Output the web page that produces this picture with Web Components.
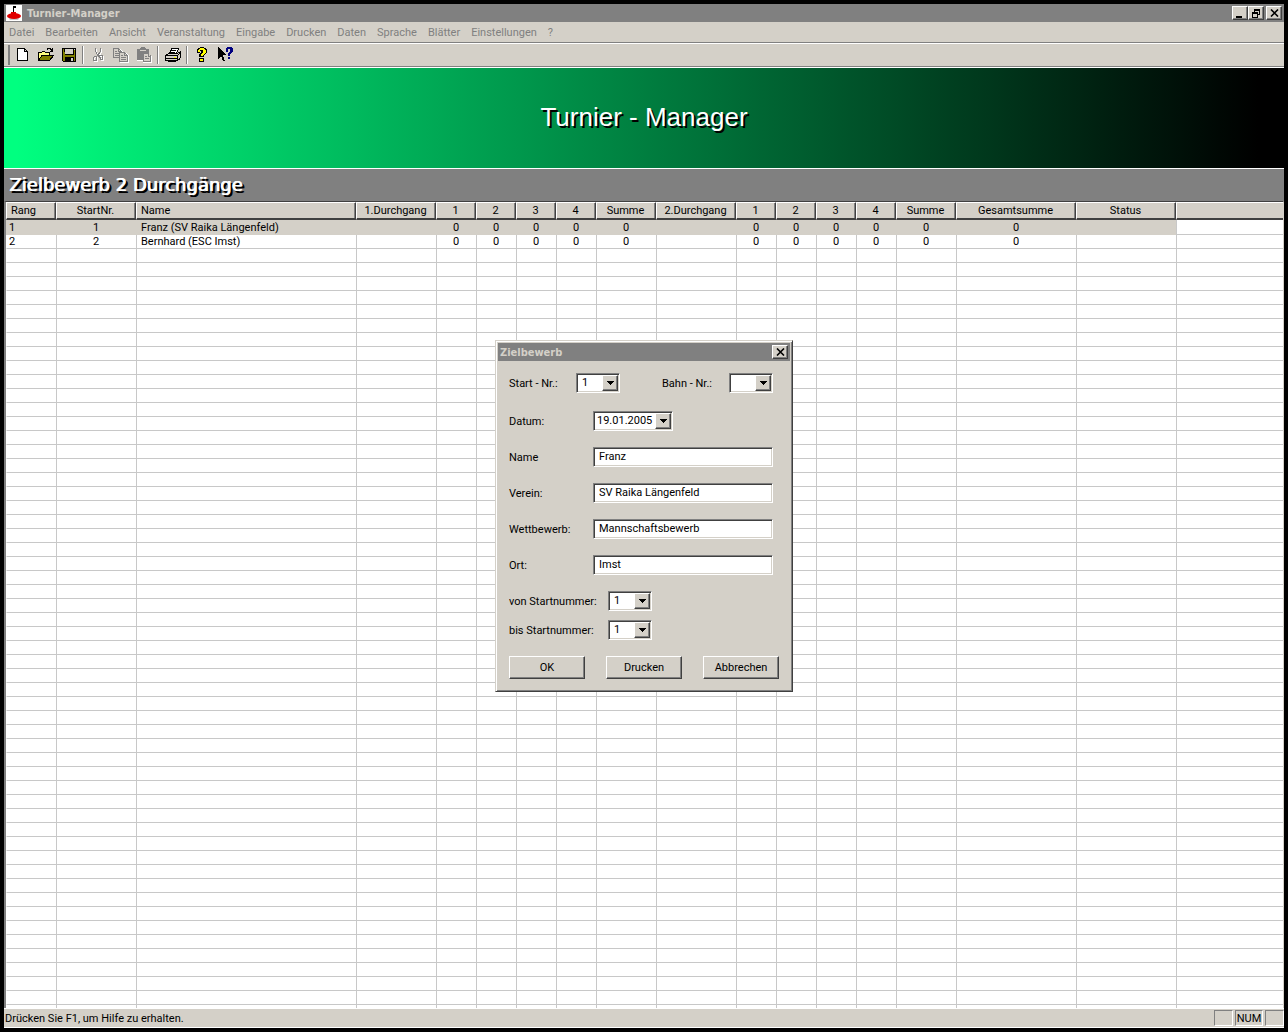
<!DOCTYPE html>
<html lang="de">
<head>
<meta charset="utf-8">
<title>Turnier-Manager</title>
<style>
  :root {
    --face: #d4d0c8;
    --shade: #808080;
    --dark: #404040;
    --light: #ffffff;
    --ui: Roboto, "Liberation Sans", sans-serif;
    --heavy: "DejaVu Sans Condensed", "DejaVu Sans", sans-serif;
  }
  html, body { height: 100%; margin: 0; }
  body { background: #000; font: 11px/14px var(--ui); color: #000; }
</style>
</head>
<body>
<tm-window>
  <title-bar slot="title" caption="Turnier-Manager" kind="main"></title-bar>
  <menu-bar slot="menu" items="Datei,Bearbeiten,Ansicht,Veranstaltung,Eingabe,Drucken,Daten,Sprache,Blätter,Einstellungen,?"></menu-bar>
  <tool-bar slot="tools"></tool-bar>
  <app-banner slot="banner">Turnier - Manager</app-banner>
  <section-title slot="heading">Zielbewerb 2 Durchgänge</section-title>
  <result-table></result-table>
  <status-bar slot="status">Drücken Sie F1, um Hilfe zu erhalten.</status-bar>
  <entry-dialog slot="dialog"></entry-dialog>
</tm-window>

<script>
const define = (name, html, setup) => {
  const template = document.createElement('template');
  template.innerHTML = '<style>*,*::before,:host{box-sizing:border-box}</style>' + html;
  customElements.define(name, class extends HTMLElement {
    connectedCallback() {
      if (this.shadowRoot) return;
      const root = this.attachShadow({ mode: 'open' });
      root.append(template.content.cloneNode(true));
      if (setup) setup(this, root);
    }
  });
};

const icons = {
  'Neu': '<path fill="#fff" stroke="#000" d="M2.5 1.5h7l3 3v9h-10zM9.500 1.500v3h3"/>',
  'Öffnen': '<path fill="#ffff80" stroke="#000" d="M.5 13.500v-8h3l1-1h2l1 1h4v3"/><path fill="#808000" stroke="#000" d="M.5 13.500l3.500-5h11.500l-4 5z"/><path fill="none" stroke="#000" d="M9 2.500l1-1h2l2 2M14.500 1v3.500h-3"/>',
  'Speichern': '<path fill="#808000" stroke="#000" d="M1.500 1.500h13v13h-12l-1-1z"/><path fill="#d4d0c8" d="M4 2h8v6H4z"/><path d="M4 10h9v5H4zM3 2h1v6h9V2h-1v5H4z"/><path fill="#d4d0c8" d="M10 11h2v3h-2zM13 2h1v1h-1z"/>',
  'Ausschneiden': '<path fill="none" stroke="#fff" d="M6.500 2v3l2 4 2 2M11.500 2v3l-3 5M5.500 10.500h2v4h-3v-3zM10.500 9.500h3v4h-2z"/><path fill="none" stroke="#808080" d="M5.500 1v3l2 4 2 2M10.500 1v3l-3 5M4.500 9.500h2v4h-3v-3zM9.500 8.500h3v4h-2z"/>',
  'Kopieren': '<path fill="none" stroke="#fff" d="M1.500 2.500h6l2 2v6h-8zM7.500 6.500h6l2 2v7h-8z"/><path fill="#d4d0c8" stroke="#808080" d="M.5 1.500h5l3 3v6h-8zM5.500 1.500v3h3M2 4.500h2M2 6.500h5M2 8.500h4"/><path fill="#d4d0c8" stroke="#808080" d="M6.500 5.500h5l3 3v6h-8zM11.500 5.500v3h3M8 8.500h2M8 10.500h5M8 12.500h5"/>',
  'Einfügen': '<path fill="#808080" d="M1 2h3l1-2h4l1 2h3v6h2v7H7v-2H1z"/><path fill="#d4d0c8" d="M4 3h6v1H4zM8 7h4l2 2v5H8z"/><path fill="none" stroke="#808080" d="M9 9.500h2M9 11.500h4M12.500 7v2.500h2"/><path fill="none" stroke="#fff" d="M1 13.500h6M7 15.500h8.500V9"/>',
  'Drucken': '<path fill="#fff" stroke="#000" d="M4.500 6.500l2-5h7l-2 5z"/><path fill="#d4d0c8" stroke="#000" d="M.5 8.500l3-2h9l3-2v6l-3 3h-12z"/><path fill="none" stroke="#000" d="M6 3.500h5M5 5.500h5M.5 8.500h12v5M12.500 8.500l3-3M1 11.500h11M3 14.500h8M13 12.500h2"/><path fill="#ff0" d="M9 10h2v1H9z"/>',
  'Info': '<path d="M4 1h2V0h4v1h2v1h1v4h-1v1h-1v1h-1v2H5V7h1V6h1V4H6v2H3V2h1zM5 11h5v4H5z"/><path fill="#ff0" d="M5 2h1V1h4v1h1v1h1v3h-1v1h-1v1H9v1H7V7h1V6h1V3H6v2H4V3h1zM6 12h3v2H6z"/>',
  'Hilfe': '<path d="M1 0v12l3-3 2 5h2L6 8h4z"/><path fill="#000080" d="M9 1h1V0h5v1h1v4h-1v1h-1v1h-1v2h-2V6h1V5h1V2h-2v3H9zM11 10h2v2h-2z"/>'
};
const icon = name => `<svg width="16" height="16" viewBox="0 0 16 16" shape-rendering="crispEdges" aria-hidden="true">${icons[name]}</svg>`;

const raised = 'border:1px solid;border-color:var(--light) var(--dark) var(--dark) var(--light);box-shadow:inset -1px -1px var(--shade);background:var(--face);';
const sunken = 'border:1px solid;border-color:var(--shade) var(--light) var(--light) var(--shade);box-shadow:inset 1px 1px var(--dark),inset -1px -1px var(--face);background:#fff;';
const arrow = '<svg width="7" height="4" viewBox="0 0 7 4" shape-rendering="crispEdges" aria-hidden="true"><path d="M0 0h7v1H6v1H5v1H4v1H3V3H2V2H1V1H0z"/></svg>';

define('tm-window', `
  <style>
    :host { display: flex; flex-direction: column; height: 100vh; padding: 4px; position: relative; }
    main { flex: 1; min-height: 0; display: flex; flex-direction: column; background: var(--face); }
    .grid { flex: 1; min-height: 0; overflow: hidden; }
    .modal { position: absolute; inset: 0; display: flex; align-items: center; justify-content: center; }
  </style>
  <main>
    <slot name="title"></slot><slot name="menu"></slot><slot name="tools"></slot>
    <slot name="banner"></slot><slot name="heading"></slot>
    <div class="grid"><slot></slot></div>
    <slot name="status"></slot>
  </main>
  <div class="modal"><slot name="dialog"></slot></div>`);

define('title-bar', `
  <style>
    :host { display: flex; align-items: center; height: 18px; padding: 0 2px; background: var(--shade); color: var(--face); font: bold 11px/14px var(--heavy); }
    .logo { display: none; margin-right: 5px; }
    :host([kind=main]) .logo { display: block; }
    span { flex: 1; padding-top: 1px; }
    button { width: 16px; height: 14px; padding: 0; display: flex; align-items: center; justify-content: center; ${raised} }
    .min, .max { display: none; }
    :host([kind=main]) button { display: flex; }
    .close { margin-left: 2px; }
  </style>
  <svg class="logo" width="16" height="16" viewBox="0 0 16 16" aria-hidden="true"><path fill="#fff" d="M0 0h16v16H0z"/><path d="M7 1h3v2H8v4H7z"/><path fill="#c8c8c8" d="M2 12h12l-2 3H4z"/><ellipse cx="8" cy="11" rx="7" ry="3" fill="#e00000"/><path fill="#e00000" d="M5 7h5v3H5z"/></svg>
  <span></span>
  <button class="min" aria-label="Minimieren"><svg width="10" height="9" shape-rendering="crispEdges"><path d="M1 7h6v2H1z"/></svg></button>
  <button class="max" aria-label="Wiederherstellen"><svg width="10" height="9" shape-rendering="crispEdges"><path fill="none" stroke="#000" d="M3.500 3V.5h5v5H7M3 1.500h6M1.500 3.500h5v5h-5zM1 4.500h6"/></svg></button>
  <button class="close" aria-label="Schließen"><svg width="9" height="8"><path stroke="#000" stroke-width="1.600" d="M1 .5l7 7M8 .5l-7 7"/></svg></button>`,
  (host, root) => { root.querySelector('span').textContent = host.getAttribute('caption'); });

define('menu-bar', `
  <style>
    :host { display: block; border-bottom: 1px solid var(--shade); }
    nav { display: flex; gap: 11px; padding: 4px 5px 2px; }
    button { all: unset; color: #808080; line-height: 14px; }
  </style><nav></nav>`,
  (host, root) => {
    root.querySelector('nav').innerHTML = host.getAttribute('items').split(',').map(t => `<button>${t}</button>`).join('');
  });

define('tool-bar', `
  <style>
    :host { display: flex; align-items: center; height: 25px; padding: 0 0 2px 4px; border-top: 1px solid var(--light); border-bottom: 1px solid var(--light); box-shadow: inset 0 -1px var(--shade); }
    button { width: 23px; height: 20px; padding: 0; border: 0; background: none; display: grid; place-items: center; }
    i { width: 2px; height: 18px; margin: 0 2px; border-left: 1px solid var(--shade); border-right: 1px solid var(--light); }
    i.grip { margin: 0 1px 0 0; border-color: var(--light) var(--shade); height: 20px; }
  </style>`,
  (host, root) => {
    const b = n => `<button aria-label="${n}">${icon(n)}</button>`;
    const box = document.createElement('template');
    box.innerHTML = '<i class="grip"></i>' +
      [['Neu', 'Öffnen', 'Speichern'], ['Ausschneiden', 'Kopieren', 'Einfügen'], ['Drucken'], ['Info', 'Hilfe']]
        .map(g => g.map(b).join('')).join('<i></i>');
    root.append(box.content);
  });

define('app-banner', `
  <style>
    :host { display: flex; align-items: center; justify-content: center; height: 101px; padding-bottom: 2px; border-bottom: 1px solid var(--light);
      background: linear-gradient(90deg, #00ff80 1%, #000 98%); color: #fff; font: 26px/30px "Liberation Sans", Arial, sans-serif; text-shadow: 2px 2px #000; }
  </style><slot></slot>`);

define('section-title', `
  <style>
    :host { display: block; padding: 4px 5px 5px; background: var(--shade); color: #fff; font: 18px/23px "DejaVu Sans", sans-serif; text-shadow: 1px 0 #fff, 2px 2px #000, 3px 2px #000; }
  </style><slot></slot>`);

define('result-table', `
  <style>
    :host { display: block; height: 100%; overflow: hidden; background: #fff; border: solid var(--dark); border-width: 1px 1px 0 2px; border-right-color: var(--face); border-left-color: var(--shade); }
    table { width: 100%; table-layout: fixed; border-collapse: separate; border-spacing: 0; }
    th, td { padding: 0 1px 0 0; overflow: visible; white-space: nowrap; text-align: center; font-weight: normal; line-height: 13px; }
    th { height: 18px; background: var(--face); border: solid; border-width: 1px 1px 2px 1px; border-color: var(--light) var(--dark) var(--dark) var(--light); box-shadow: inset -1px 0 var(--shade), 0 2px var(--light); line-height: 15px; }
    td { height: 14px; border-left: 1px solid #c8c8c8; border-bottom: 1px solid #c8c8c8; }
    tbody tr:first-child td { height: 15px; padding-top: 1px; }
    td:first-child { border-left-color: transparent; }
    th:last-child { border-right: 0; box-shadow: 0 2px var(--light); }
    .l { text-align: left; padding-left: 4px; }
    .l:first-child { padding-left: 2px; }
    th.l:first-child { padding-left: 4px; }
    tr.on td:not(:last-child) { background: var(--face); border-color: var(--face); }
  </style>
  <table><colgroup></colgroup><thead><tr></tr></thead><tbody></tbody></table>`,
  (host, root) => {
    const cols = [['Rang', 50], ['StartNr.', 80], ['Name', 220], ['1.Durchgang', 80], ['1', 40], ['2', 40], ['3', 40], ['4', 40], ['Summe', 60],
      ['2.Durchgang', 80], ['1', 40], ['2', 40], ['3', 40], ['4', 40], ['Summe', 60], ['Gesamtsumme', 120], ['Status', 100], ['', 0]];
    const z = ['0', '0', '0', '0', '0'];
    const rows = [['1', '1', 'Franz (SV Raika Längenfeld)', '', ...z, '', ...z, '0', '', ''],
      ['2', '2', 'Bernhard (ESC Imst)', '', ...z, '', ...z, '0', '', '']];
    while (rows.length < 80) rows.push(cols.map(() => ''));
    const cell = (tag, text, i) => `<${tag}${i === 0 || i === 2 ? ' class="l"' : ''}>${text}</${tag}>`;
    root.querySelector('colgroup').innerHTML = cols.map(c => c[1] ? `<col style="width:${c[1]}px">` : '<col>').join('');
    root.querySelector('thead tr').innerHTML = cols.map((c, i) => cell('th', c[0], i)).join('');
    root.querySelector('tbody').innerHTML = rows.map((r, n) => `<tr${n ? '' : ' class="on"'}>${r.map((t, i) => cell('td', t, i)).join('')}</tr>`).join('');
  });

define('status-bar', `
  <style>
    :host { display: flex; align-items: flex-end; gap: 2px; height: 20px; padding: 0 0 1px 1px; border-bottom: 1px solid var(--light); border-top: 1px solid var(--light); }
    span { flex: 1; line-height: 14px; }
    b { font-weight: normal; width: 19px; height: 16px; line-height: 16px; text-align: center; border: 1px solid; border-color: var(--shade) var(--light) var(--light) var(--shade); }
    b.wide { width: 28px; }
  </style><span><slot></slot></span><b></b><b class="wide">NUM</b><b></b>`);

define('push-button', `
  <style>
    :host { display: block; }
    button { display: block; width: 76px; height: 23px; padding: 0; font: inherit; color: inherit; ${raised} }
  </style><button type="button"><slot></slot></button>`);

define('form-field', `
  <style>
    :host { display: flex; align-items: center; }
    label { width: var(--label, 84px); padding-top: 2px; white-space: nowrap; }
    .box { display: flex; width: var(--box, 180px); height: 20px; padding: 2px; position: relative; ${sunken} }
    input, select { appearance: none; flex: 1; min-width: 0; width: 100%; border: 0; margin: 0; padding: 0 3px; background: none; font: inherit; color: inherit; outline: 0; border-radius: 0; }
    .date input { padding: 0 1px; }
    .drop { width: 16px; position: absolute; right: 1px; top: 1px; bottom: 1px; display: grid; place-items: center; padding: 0; pointer-events: none; ${raised} }
  </style><label for="c"></label><div class="box"></div>`,
  (host, root) => {
    const kind = host.getAttribute('kind');
    const value = host.getAttribute('value') || '';
    root.querySelector('label').textContent = host.getAttribute('label');
    const box = root.querySelector('.box');
    if (kind === 'select') box.innerHTML = `<select id="c"><option>${value}</option></select><span class="drop">${arrow}</span>`;
    else box.innerHTML = `<input id="c" type="text" value="${value}">` + (kind === 'date' ? `<span class="drop">${arrow}</span>` : '');
    if (kind === 'date') box.classList.add('date');
  });

define('entry-dialog', `
  <style>
    :host { display: block; width: 298px; padding: 1px; background: var(--face); border: 1px solid; border-color: var(--face) var(--dark) var(--dark) var(--face); box-shadow: inset 1px 1px var(--light), inset -1px -1px var(--shade); }
    form { display: flex; flex-direction: column; gap: 16px; padding: 11px 12px; }
    .pair, .buttons { display: flex; justify-content: space-between; }
    .pair { padding-right: 6px; }
    .combo { --box: 44px; --label: 67px; }
    .date { --box: 80px; padding-top: 2px; }
    .range { display: flex; flex-direction: column; gap: 9px; --box: 44px; --label: 99px; }
    title-bar { margin: 1px; }
  </style>
  <title-bar caption="Zielbewerb"></title-bar>
  <form>
    <div class="pair">
      <form-field class="combo" kind="select" label="Start - Nr.:" value="1"></form-field>
      <form-field class="combo" kind="select" label="Bahn - Nr.:"></form-field>
    </div>
    <form-field class="date" kind="date" label="Datum:" value="19.01.2005"></form-field>
    <form-field label="Name" value="Franz"></form-field>
    <form-field label="Verein:" value="SV Raika Längenfeld"></form-field>
    <form-field label="Wettbewerb:" value="Mannschaftsbewerb"></form-field>
    <form-field label="Ort:" value="Imst"></form-field>
    <div class="range">
      <form-field kind="select" label="von Startnummer:" value="1"></form-field>
      <form-field kind="select" label="bis Startnummer:" value="1"></form-field>
    </div>
    <div class="buttons"><push-button>OK</push-button><push-button>Drucken</push-button><push-button>Abbrechen</push-button></div>
  </form>`);
</script>
</body>
</html>
